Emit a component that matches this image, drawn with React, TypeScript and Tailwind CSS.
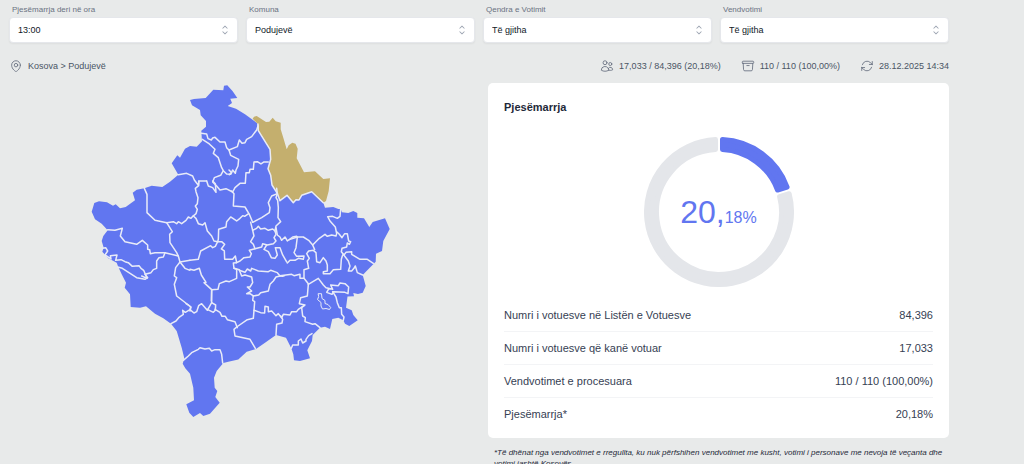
import React, { useState } from 'react';
import {
  HiChevronUpDown,
  HiOutlineArchiveBox,
  HiOutlineArrowPath,
  HiOutlineMapPin,
  HiOutlineUsers,
} from 'react-icons/hi2';

const filters = [
  { id: 'ora', label: 'Pjesëmarrja deri në ora', options: ['13:00', '11:00', '15:00', '19:00'] },
  { id: 'komuna', label: 'Komuna', options: ['Podujevë', 'Prishtinë', 'Prizren'] },
  { id: 'qendra', label: 'Qendra e Votimit', options: ['Të gjitha'] },
  { id: 'vendvotimi', label: 'Vendvotimi', options: ['Të gjitha'] },
];

const rows = [
  { label: 'Numri i votuesve në Listën e Votuesve', value: '84,396' },
  { label: 'Numri i votuesve që kanë votuar', value: '17,033' },
  { label: 'Vendvotimet e procesuara', value: '110 / 110 (100,00%)' },
  { label: 'Pjesëmarrja*', value: '20,18%' },
];

const COUNTRY =
  '190,99 194,98 205.7,97 213.3,88.7 223.3,89.3 224,84.7 227.3,84.3 232.7,90.3 237.3,97 230.3,97.7 232,102 227.7,105 236,107.7 245,113.3 257.3,122.3 258.3,129.7 270,148.3 270.7,158.3 268,167.7 270.7,174.3 272,184 277.3,192.3 280,199.7 287,194.3 293.3,201.7 296,198.7 299,199 301.7,194.3 311.7,190.7 323.3,201.7 325,206.7 333.3,206 338.3,208 340.7,208 342,211.3 348.3,212 353.3,210 357.3,212 357.3,216.7 364,217.3 369.3,226 372.7,221 385,217.3 389.7,228 383.3,240 382,250 376,252.7 375.7,260.7 368.3,268.3 362.7,274 365.7,285 362.7,291.7 358,293 353.3,292 354,295.3 347.5,295.5 346,306.7 351.7,309.3 353.3,314 357.7,319.3 349.3,325 345,322.7 343.3,319.3 338.3,316.7 332.3,318 330,328 325,325.7 320,326.7 312.7,334 312,340 307.3,349.3 310,357.3 300,360 294,359.3 293.3,353.3 291.3,347.3 286,336.7 276,334 265,341.7 256,348 246.7,350.7 238.3,358.5 228.3,360.7 223.3,362 216.7,370 214,376.7 214.7,386.7 217.3,390 215.3,396 219.7,401.7 210,412.7 203.3,415 200,412 193.3,416 189.3,411.7 186.3,403.3 194,399.3 193.3,386.7 190,372.7 185.3,367.3 182.7,362.7 184.3,357.3 181.7,346.7 176.7,330 171,322.7 163.3,317.3 155,312.7 146,305.3 140,306.7 130.7,306 130,293.3 124.7,286.7 126,281.7 121.7,273.3 118.3,266 116.7,261.7 108.3,257.3 102.3,250.7 103.7,246.7 101.7,240 103.3,235 107.7,229.3 101.7,222.7 95,218.3 91.7,210.7 94.3,202 99,200.3 107,201.3 113,204.7 115.7,203.3 120,207.3 125.7,206 135,199.3 132.7,191.7 136.7,188.7 144.3,187.3 151.7,184.7 162.3,186 170,180.7 178.3,173.7 171.7,162.3 177.3,154.3 180,156.7 185,147.7 190,145 196.7,145.7 202,140.3 201.3,129.7 206,125.7 206,120 200.7,114.3 200,109 192,104.3';

const PODUJEVE =
  '252.7,117.7 254,115.7 256.7,115 266,121 269.3,120.7 272.7,116.7 275.7,120.3 280.7,121.7 280.7,128.3 283.3,136.7 286.7,148.3 288.7,144.3 292.3,141.7 295.5,142.7 297.7,147.7 296.7,157.3 304,171.3 315,170.3 323.3,178 330,177.3 328.7,190 326,200 323.3,201.7 311.7,190.7 301.7,194.3 299,199 296,198.7 293.3,201.7 287,194.3 280,199.7 277.3,192.3 272,184 270.7,174.3 268,167.7 270.7,158.3 270,148.3 258.3,129.7 258,123.3';

// Municipal borders, drawn sheet by sheet. Each sheet has its own origin and a 1:3 scale.
const borderSheets = [
  {
    origin: [160, 75],
    lines: [
      '124,172 140,174 144,188 154,192 158,186 165,184 180,198 195,198 200,215 207,222 232,212 238,192 246,202 255,200 260,190 275,182 290,162 294,150',
      '127,190 148,204 165,220 160,232 175,245 185,275 190,284 182,298 163,305 158,318 170,330 180,342 198,338 218,348 225,335 240,322 256,322 258,290 268,290 270,280 280,280 282,258 292,257 303,264 312,258 325,258',
      '207,222 212,238 236,250 234,270 228,282 226,292 218,282 212,295 200,294 190,284',
      '207,282 215,290 208,296',
      '55,296 80,292 98,300 103,312 115,328 117,315 140,315',
    ],
  },
  {
    origin: [190, 180],
    lines: [
      '26,0 26,14 16,22 18,32 24,50 22,68 16,75 22,85 18,98 10,105 18,112 25,128 38,132 45,125 52,150 65,165 72,180 83,182',
      '50,0 55,15 68,20 78,34 76,8 68,0',
      '125,30 132,38 130,75 165,78 178,100 188,124',
      '176,98 164,106 158,104 150,112 140,120 122,108 110,122 108,138 86,145 85,175 83,182',
      '188,124 215,110 238,95 240,80 235,65 245,45 262,38 260,22',
      '262,38 258,50 263,58 265,80 264,110 272,122 258,135 255,150 248,144 235,148 225,142 212,144 205,136 200,142 188,148 182,124',
      '188,148 192,165 182,182 190,190 195,203 178,208 184,218 180,228 162,230 150,240 140,245 136,225 128,235 104,235 103,210 94,204 104,190 95,182 83,182',
      '83,182 76,196 68,200 62,194 32,210 25,235 0,238',
      '195,203 215,198 218,188 232,192 250,188 258,180 252,170 258,160 255,150',
      '230,192 222,205 235,212 244,230 255,232 262,222 256,200 270,200 278,222 290,243',
      '258,140 262,162 270,168 275,178 285,168 292,180 308,168 320,166',
      '140,245 130,246 132,262 148,266 150,272 155,285 165,282 185,288 188,305 180,318 172,318 185,330 170,338 180,338 190,345',
      '148,268 165,274 172,264 182,270 185,262 205,270 235,272 242,268 262,275 270,285 258,288 250,300 240,310 235,330 212,335 206,342 190,345',
      '0,265 12,268 28,262 34,282 48,304 42,305 65,326 64,360',
      '65,326 84,325 88,308 108,300 118,302 140,292 140,265 132,262',
      '270,285 278,286 284,284',
    ],
  },
  {
    origin: [85, 180],
    lines: [
      '178,22 186,40 186,95 210,118 245,125 265,122 275,128 280,122 290,128 303,118 310,108 318,112 325,104',
      '245,125 262,152 254,160 255,185 275,215 280,225 285,243 272,260 268,285 275,290 268,310 275,345 318,378 315,390',
      '68,146 90,148 112,142 106,165 120,182 155,190 172,178 188,192 188,205 194,206 196,218 210,215 240,215 280,225',
      '240,215 235,228 222,230 215,240 215,262 205,266 198,275 180,280 188,290 180,295 155,290 112,262 98,258',
      '52,202 62,200 68,210 60,222 78,234 76,224 96,222 92,238 108,236 120,242 130,245 142,256 162,254 168,262 176,268 186,292 170,285',
      '285,243 315,238',
      '285,243 300,262 315,268',
    ],
  },
  {
    origin: [280, 190],
    lines: [
      '182,54 180,76 172,82 158,76 143,77 150,90 166,108 170,128 168,135 155,132 142,136 135,130 118,142 98,162 86,148 70,138 52,138 28,146',
      '170,122 178,130 186,140 194,128 202,128 206,150 212,152 208,160 202,156 200,168 186,172 184,182 192,192 198,184 215,182 215,190 240,205 262,205 280,217',
      '188,192 184,205 182,235 160,236 150,248 130,248 130,242 142,240 142,222 138,210 130,200 120,215 110,212 108,185 100,178 86,180 80,188 88,202 82,210 86,232 72,236 72,262 85,278',
      '190,190 205,210 210,225 205,240 215,240 222,232 226,225 232,245 248,252',
      '22,216 30,208 45,208 55,202 70,205 72,195 50,196 42,185 48,170 52,138',
      '98,162 104,176',
      '0,254 35,250 42,254 60,250 60,262 72,262',
    ],
  },
  {
    origin: [230, 260],
    lines: [
      '235,70 265,52 280,72 288,80 308,85 302,72 325,74 330,66 345,68 356,78 354,98 345,94 310,92 306,100 290,94 296,84 300,84',
      '308,92 318,108 322,125 328,140 334,140 335,160 342,168 340,178',
      '235,70 232,105 212,110 208,128 225,132 215,140 218,165 226,170 225,182 248,190 255,188 270,200',
      '222,134 205,145 200,152 185,152 180,162 160,160 155,170 145,158 138,164 125,150 115,152 115,138 105,136 104,156 92,155 72,148 74,122 68,118 70,105',
      '72,148 70,172 52,176 20,198 12,205 15,225 60,235 76,262',
      '152,165 158,175 156,186 140,190 138,222',
      '184,262 188,252 205,252 205,240 213,234 218,246 228,240 228,235 236,224 246,218',
    ],
  },
  {
    origin: [120, 270],
    lines: [
      '153,158 168,150 176,140 190,130 188,118 196,124 210,116 222,126 230,122 236,104 245,98 262,118 275,95 275,56',
      '210,116 212,108 205,102 198,98',
      '262,115 280,124 286,118 287,102 275,95',
      '285,115 300,124 306,136 316,136 322,146 345,152 352,170',
      '190,268 205,255 215,245 235,235 240,230 255,234 268,232 275,240 285,236 300,236 305,250 308,276',
    ],
  },
];

const KosovoMap: React.FC = () => (
  <svg viewBox="90 82 302 336" className="w-[302px] max-w-full" role="img" aria-label="Harta e Kosovës">
    <polygon points={COUNTRY} fill="#6176f0" />
    <polygon points={PODUJEVE} fill="#c4af6e" />
    <g fill="none" stroke="#e8ebf8" strokeWidth={4.5} strokeLinejoin="round" strokeLinecap="round">
      {borderSheets.map(({ origin, lines }) => (
        <g key={origin.join('-')} transform={`translate(${origin[0]} ${origin[1]}) scale(0.3333)`}>
          {lines.map((points) => (
            <polyline key={points} points={points} />
          ))}
        </g>
      ))}
      <polyline
        strokeWidth={1.5}
        points="258,123 258.3,129.7 270,148.3 270.7,158.3 268,167.7 270.7,174.3 272,184 277.3,192.3 280,199.7 287,194.3 293.3,201.7 296,198.7 299,199 301.7,194.3 311.7,190.7 323.3,201.7"
      />
      <polygon
        strokeWidth={1}
        points="318.5,292.7 321.5,292.7 322,297.5 325,299.5 325,302.5 328,303.5 330.7,306.5 329.5,308.5 326,307.5 322.5,308 321,305 321,301.5 317.5,298.5 318.5,296"
      />
    </g>
  </svg>
);

// Ring segment between two angles in degrees; the round stroke gives it soft corners.
const segmentPath = (from: number, to: number) => {
  const outer = 72.5;
  const inner = 62.5;
  const point = (radius: number, degrees: number, side: number) => {
    const angle = (degrees * Math.PI) / 180 + side * Math.asin(3.5 / radius);
    return `${(75 + radius * Math.sin(angle)).toFixed(2)} ${(75 - radius * Math.cos(angle)).toFixed(2)}`;
  };
  const large = to - from > 180 ? 1 : 0;
  return `M${point(outer, from, 1)}A${outer} ${outer} 0 ${large} 1 ${point(outer, to, -1)}L${point(inner, to, -1)}A${inner} ${inner} 0 ${large} 0 ${point(inner, from, 1)}Z`;
};

const Donut: React.FC<{ percent: number }> = ({ percent }) => {
  const split = percent * 3.6;
  const [whole, decimals] = percent.toFixed(2).split('.');

  return (
    <div className="relative w-[150px] h-[150px] mx-auto">
      <svg viewBox="0 0 150 150" className="w-full h-full" strokeWidth={5} strokeLinejoin="round">
        <path d={segmentPath(split, 360)} fill="#e4e6ea" stroke="#e4e6ea" />
        <path d={segmentPath(0, split)} fill="#6176f0" stroke="#6176f0" />
      </svg>
      <div className="absolute inset-0 flex items-center justify-center text-[#6176f0]">
        <p className="text-[32px] leading-none">
          {whole},<span className="text-base leading-none">{decimals}%</span>
        </p>
      </div>
    </div>
  );
};

const App: React.FC = () => {
  const [values, setValues] = useState<Record<string, string>>({});

  return (
    <div className="h-screen overflow-hidden bg-[#e8eaea] font-['Liberation_Sans',Arial,sans-serif] text-gray-700">
      <div className="max-w-[949px] pl-[9px]">
        <div className="grid grid-cols-4 gap-2 pt-1">
          {filters.map(({ id, label, options }) => (
            <div key={id}>
              <label htmlFor={id} className="block pl-[3px] text-[8px] leading-3 text-gray-500">
                {label}
              </label>
              <div className="relative mt-px">
                <select
                  id={id}
                  value={values[id] ?? options[0]}
                  onChange={(e) => setValues({ ...values, [id]: e.target.value })}
                  className="block w-full h-[26px] appearance-none rounded-[4px] border border-gray-200 bg-white pt-0.5 pl-2 pr-6 text-[9px] text-gray-900 shadow-xs outline-none"
                >
                  {options.map((option) => (
                    <option key={option}>{option}</option>
                  ))}
                </select>
                <HiChevronUpDown className="pointer-events-none absolute right-1.5 top-1.5 size-3.5 text-gray-400" />
              </div>
            </div>
          ))}
        </div>

        <div className="flex items-center justify-between pt-4 text-[9px] leading-[14px] text-gray-600">
          <div className="flex items-center gap-[5px]">
            <HiOutlineMapPin className="size-3.5 text-gray-500" />
            <span>Kosova &gt; Podujevë</span>
          </div>
          <div className="flex items-center gap-5">
            <span className="flex items-center gap-[5px]">
              <HiOutlineUsers className="size-3.5 text-gray-500" />
              17,033 / 84,396 (20,18%)
            </span>
            <span className="flex items-center gap-[5px]">
              <HiOutlineArchiveBox className="size-3.5 text-gray-500" />
              110 / 110 (100,00%)
            </span>
            <span className="flex items-center gap-[5px]">
              <HiOutlineArrowPath className="size-3.5 text-gray-500" />
              28.12.2025 14:34
            </span>
          </div>
        </div>

        <div className="grid grid-cols-2 items-start gap-[18px] pt-2.5">
          <div className="flex justify-center pl-0.5">
            <KosovoMap />
          </div>

          <div>
            <section className="rounded-[5px] bg-white px-4 pt-4 pb-2">
              <h2 className="text-[11px] leading-4 font-bold text-gray-800">Pjesëmarrja</h2>
              <div className="pt-[22px] pb-3">
                <Donut percent={20.18} />
              </div>
              <dl className="divide-y divide-gray-100 text-[11px] leading-4 text-gray-700">
                {rows.map(({ label, value }) => (
                  <div key={label} className="flex justify-between py-2">
                    <dt>{label}</dt>
                    <dd>{value}</dd>
                  </div>
                ))}
              </dl>
            </section>
            <p className="px-1.5 pt-[9px] text-[8px] leading-[11px] italic text-gray-800">
              *Të dhënat nga vendvotimet e rregullta, ku nuk përfshihen vendvotimet me kusht, votimi i personave me
              nevoja të veçanta dhe votimi jashtë Kosovës.
            </p>
          </div>
        </div>
      </div>
    </div>
  );
};

export default App;
